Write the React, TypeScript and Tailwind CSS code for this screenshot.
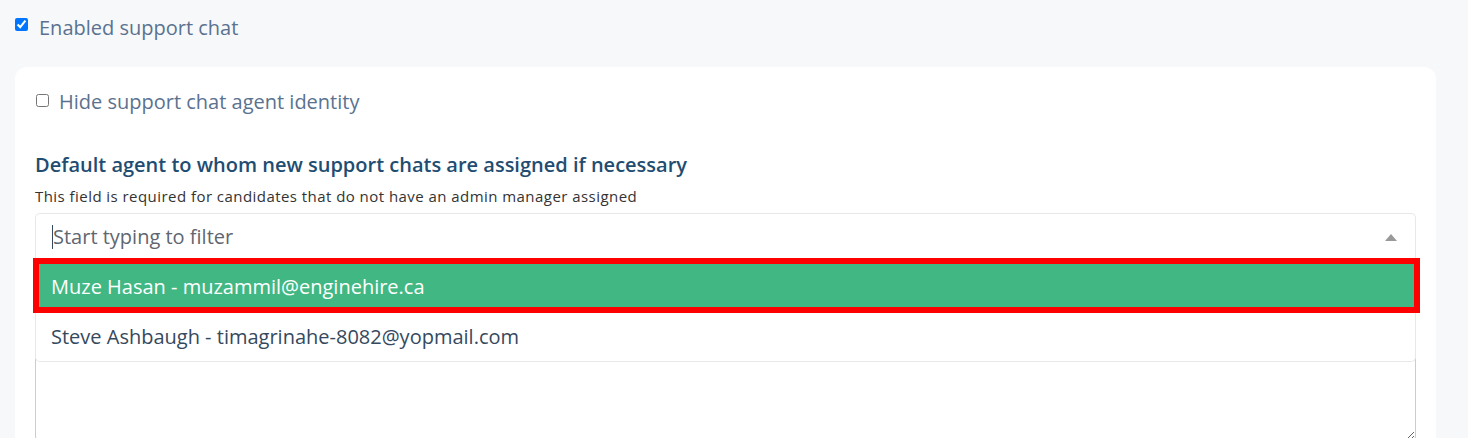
import React from "react";

export default function App() {
  const font = { fontFamily: '"Open Sans", "Noto Sans", sans-serif' };
  return (
    <div className="flex h-[438px] w-[1483px] overflow-hidden" style={font}>
      <div className="flex-1 bg-[#f7f8fa] pl-[15px] pr-[32px]">
        <label className="mt-[14px] flex h-[24px] items-center gap-[11px]">
          <input type="checkbox" defaultChecked className="m-0 mb-[4px] h-[13px] w-[13px]" />
          <span className="pt-[4px] text-[20px] leading-[24px] text-[#5a7290]">Enabled support chat</span>
        </label>
        <div className="mt-[29px] h-[400px] rounded-[12px] bg-white px-[20px] pt-[21px]">
          <label className="flex h-[24px] items-center gap-[10px] pl-[1px]">
            <input type="checkbox" className="m-0 h-[13px] w-[13px]" />
            <span className="pt-[4px] text-[20px] leading-[24px] text-[#5a7290]">Hide support chat agent identity</span>
          </label>
          <div className="mt-[41px] text-[20px] font-semibold leading-[24px] text-[#1f4d72]">
            Default agent to whom new support chats are assigned if necessary
          </div>
          <div className="mt-[9px] text-[15px] leading-[20px] tracking-[0.45px] text-[#333333]">
            This field is required for candidates that do not have an admin manager assigned
          </div>
          <div className="relative mt-[7px]">
            <div className="flex h-[47px] items-center rounded-t-[5px] border border-b-0 border-[#e8e8e8] bg-white pl-[16px] pr-[18px]">
              <span className="h-[24px] w-[1px] bg-[#35495e]" />
              <span className="flex-1 text-[20px] text-[#5f6670]">Start typing to filter</span>
              <svg width="12" height="7" viewBox="0 0 12 7">
                <polygon points="6,0 12,7 0,7" fill="#999999" />
              </svg>
            </div>
            <textarea className="block h-[181px] w-full resize-y rounded-[4px] border border-[#c9cdd2] bg-white" />
            <div className="absolute left-0 right-0 top-[47px] z-10 rounded-b-[5px] border border-t-0 border-[#e8e8e8] bg-white">
              <div className="relative flex h-[50px] items-center bg-[#41b883] pl-[15px] pt-[4px] text-[20px] text-white">
                Muze Hasan - muzammil@enginehire.ca
                <div className="pointer-events-none absolute -bottom-[3px] -left-[3px] -right-[5px] -top-[2px] border-[6px] border-[#ff0000]" />
              </div>
              <div className="flex h-[51px] items-center pl-[15px] pt-[3px] text-[20px] text-[#35495e]">
                Steve Ashbaugh - timagrinahe-8082@yopmail.com
              </div>
            </div>
          </div>
        </div>
      </div>
      <div className="w-[15px] bg-white" />
    </div>
  );
}
